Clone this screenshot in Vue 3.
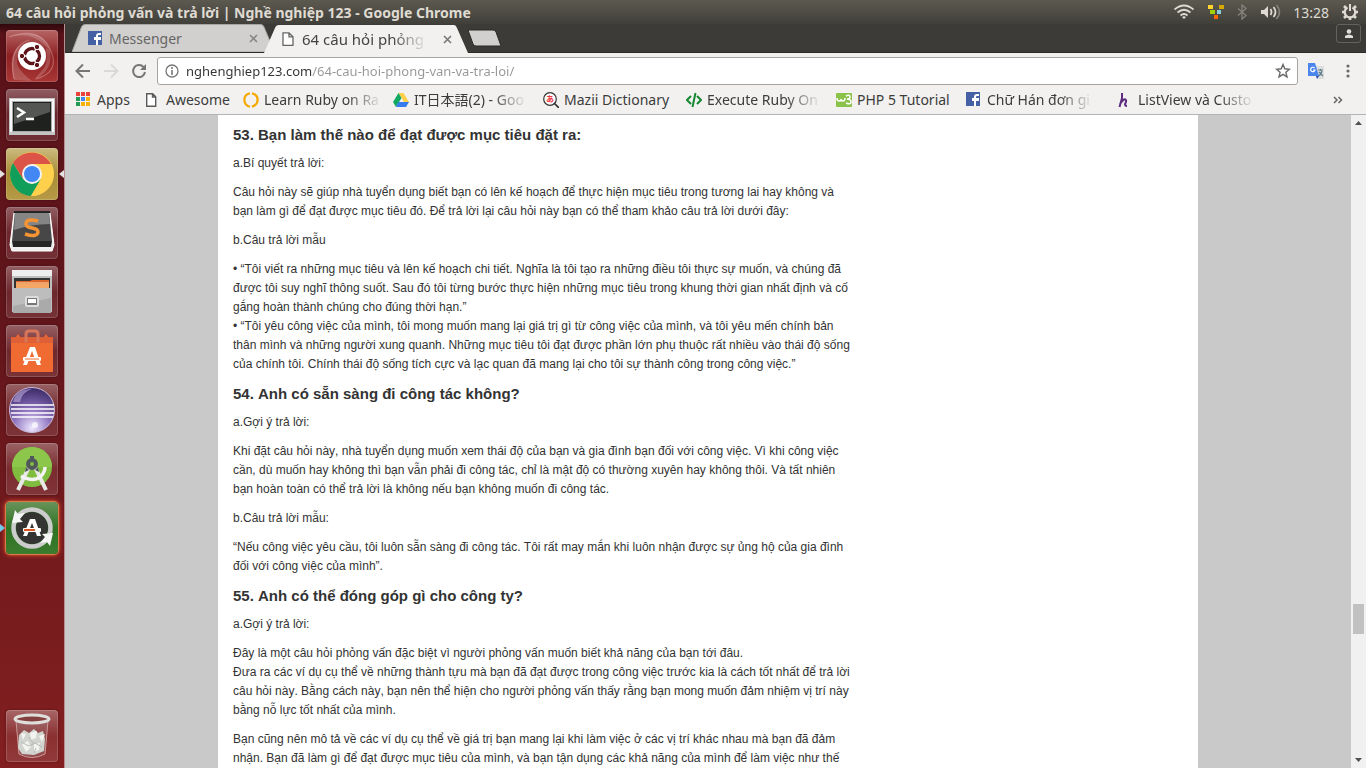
<script setup>
import { ref } from 'vue'

const address = ref('nghenghiep123.com/64-cau-hoi-phong-van-va-tra-loi/')

const bookmarks = [
  { icon: 'apps', label: 'Apps' },
  { icon: 'file', label: 'Awesome' },
  { icon: 'ring', label: 'Learn Ruby on Ra', fade: true },
  { icon: 'drive', label: 'IT日本語(2) - Goo', fade: true },
  { icon: 'mazii', label: 'Mazii Dictionary' },
  { icon: 'code', label: 'Execute Ruby On', fade: true },
  { icon: 'w3', label: 'PHP 5 Tutorial' },
  { icon: 'facebook', label: 'Chữ Hán đơn gi', fade: true },
  { icon: 'lambda', label: 'ListView và Custo', fade: true },
]

const sections = [
  {
    title: '53. Bạn làm thế nào để đạt được mục tiêu đặt ra:',
    paragraphs: [
      ['a.Bí quyết trả lời:'],
      ['Câu hỏi này sẽ giúp nhà tuyển dụng biết bạn có lên kế hoạch để thực hiện mục tiêu trong tương lai hay không và bạn làm gì để đạt được mục tiêu đó. Để trả lời lại câu hỏi này bạn có thể tham khảo câu trả lời dưới đây:'],
      ['b.Câu trả lời mẫu'],
      [
        '• “Tôi viết ra những mục tiêu và lên kế hoạch chi tiết. Nghĩa là tôi tạo ra những điều tôi thực sự muốn, và chúng đã được tôi suy nghĩ thông suốt. Sau đó tôi từng bước thực hiện những mục tiêu trong khung thời gian nhất định và cố gắng hoàn thành chúng cho đúng thời hạn.”',
        '• “Tôi yêu công việc của mình, tôi mong muốn mang lại giá trị gì từ công việc của mình, và tôi yêu mến chính bản thân mình và những người xung quanh. Những mục tiêu tôi đạt được phần lớn phụ thuộc rất nhiều vào thái độ sống của chính tôi. Chính thái độ sống tích cực và lạc quan đã mang lại cho tôi sự thành công trong công việc.”',
      ],
    ],
  },
  {
    title: '54. Anh có sẵn sàng đi công tác không?',
    paragraphs: [
      ['a.Gợi ý trả lời:'],
      ['Khi đặt câu hỏi này, nhà tuyển dụng muốn xem thái độ của bạn và gia đình bạn đối với công việc. Vì khi công việc cần, dù muốn hay không thì bạn vẫn phải đi công tác, chỉ là mật độ có thường xuyên hay không thôi. Và tất nhiên bạn hoàn toàn có thể trả lời là không nếu bạn không muốn đi công tác.'],
      ['b.Câu trả lời mẫu:'],
      ['“Nếu công việc yêu cầu, tôi luôn sẵn sàng đi công tác. Tôi rất may mắn khi luôn nhận được sự ủng hộ của gia đình đối với công việc của mình”.'],
    ],
  },
  {
    title: '55. Anh có thể đóng góp gì cho công ty?',
    paragraphs: [
      ['a.Gợi ý trả lời:'],
      [
        'Đây là một câu hỏi phỏng vấn đặc biệt vì người phỏng vấn muốn biết khả năng của bạn tới đâu.',
        'Đưa ra các ví dụ cụ thể về những thành tựu mà bạn đã đạt được trong công việc trước kia là cách tốt nhất để trả lời câu hỏi này. Bằng cách này, bạn nên thể hiện cho người phỏng vấn thấy rằng bạn mong muốn đảm nhiệm vị trí này bằng nỗ lực tốt nhất của mình.',
      ],
      ['Bạn cũng nên mô tả về các ví dụ cụ thể về giá trị bạn mang lại khi làm việc ở các vị trí khác nhau mà bạn đã đảm nhận. Bạn đã làm gì để đạt được mục tiêu của mình, và bạn tận dụng các khả năng của mình để làm việc như thế'],
    ],
  },
]
</script>

<template>
  <div class="desktop">
    <header class="panel">
      <span class="window-title">64 câu hỏi phỏng vấn và trả lời | Nghề nghiệp 123 - Google Chrome</span>
      <div class="indicators">
        <svg class="wifi" width="22" height="16" viewBox="0 0 22 16" fill="none" stroke="#dfdbd2" stroke-width="1.7">
          <path d="M1.500 5.500Q11-2.500 20.500 5.500M4.500 8.500Q11 3 17.500 8.500M7.500 11.500Q11 8.500 14.500 11.500" />
          <path d="M11 15l-2-2q2-1.600 4 0z" fill="#dfdbd2" stroke="none" />
        </svg>
        <svg class="ibus" width="16" height="16" viewBox="0 0 16 16">
          <path fill="#ffd42a" d="M0 1h5v4H0z" /><path fill="#d4aa00" d="M11 1h5v4h-5z" />
          <path fill="#a0d000" d="M2 6h5v4H2z" /><path fill="#87cdde" d="M9 6h4v4H9z" /><path fill="#ff6600" d="M6 11h4v4H6z" />
        </svg>
        <svg class="bluetooth" width="10" height="16" viewBox="0 0 10 16" fill="none" stroke="#85837c" stroke-width="1.3"><path d="M1 4.500l8 7L5 15V1l4 3.500-8 7" /></svg>
        <svg class="sound" width="20" height="16" viewBox="0 0 20 16" fill="none">
          <path d="M0 6h3l4-4v12l-4-4H0z" fill="#dfdbd2" />
          <path d="M9.500 5q2 3 0 6M12.500 3q4 5 0 10" stroke="#dfdbd2" stroke-width="1.800" /><path d="M15.500 1q6 7 0 14" stroke="#85837c" stroke-width="1.600" />
        </svg>
        <time class="clock">13:28</time>
        <svg width="18" height="18" viewBox="0 0 18 18" fill="none" stroke="#dfdbd2">
          <path d="M6.500 4.500a5.300 5.300 0 1 0 5 0" stroke-width="2.300" /><path d="M9 1v7" stroke-width="2" />
          <path d="M3 3l2 2M15 3l-2 2M1 9h3M17 9h-3M3 15l2-2M15 15l-2-2M9 14v3" stroke-width="2.600" />
        </svg>
      </div>
    </header>

    <div class="workspace">
      <nav class="launcher" aria-label="Launcher">
        <button class="tile ubuntu" aria-label="Search">
          <svg viewBox="0 0 52 52">
            <g fill="none" stroke="#e9b5b1" stroke-opacity=".4" stroke-width="1.200"><path d="M3 7Q33-4 44 19T30 49M8 49Q2 17 23 10" /></g>
            <path d="M3 7Q36-4 44 20L38 15Q25 1 3 7zM8 50Q1 22 15 15L12 27Q7 37 26 51zM44 20Q48 40 28 50L38 38Q42 32 40 18z" fill="#fff" opacity=".18" />
            <circle cx="26" cy="26" r="14" fill="#fff" />
            <circle cx="26" cy="26" r="7.500" fill="none" stroke="#5d1419" stroke-width="3.400" />
            <path d="M26 26L16 26M26 26L31 17M26 26l5 9" stroke="#fff" stroke-width="1.500" />
            <circle cx="26" cy="26" r="5.500" fill="#fff" />
            <g fill="#5d1419" stroke="#fff"><circle cx="16" cy="26" r="2.700" /><circle cx="31" cy="17" r="2.700" /><circle cx="31" cy="35" r="2.700" /></g>
          </svg>
        </button>
        <button class="tile" aria-label="Terminal">
          <svg viewBox="0 0 52 52">
            <path d="M3 9h46v37H3z" fill="#c4c4c4" /><path d="M4 10h44v33H4z" fill="#f6f6f6" /><path d="M6 12h40v31H6z" fill="#aaa" />
            <path d="M7 13h38v29H7z" fill="#1f211f" /><path d="M8 14h36v9L8 35z" fill="#777a77" opacity=".6" />
            <path d="M11 19l7 4.500-7 4.500M20 30h8" fill="none" stroke="#fff" stroke-width="2.500" />
          </svg>
        </button>
        <button class="tile chrome" aria-label="Google Chrome">
          <svg viewBox="0 0 52 52">
            <circle cx="26" cy="26" r="22" fill="#ffd04b" /><path d="M7 15A22 22 0 0 1 45 16H26L17 31z" fill="#db5447" />
            <path d="M7 15A22 22 0 0 0 25 48L35 31 26 36 17 31z" fill="#119e5a" />
            <path d="M45 16H26L35 31 25 48A22 22 0 0 0 45 16z" fill="#ffd04b" />
            <circle cx="26" cy="26" r="10" fill="#f2f2f2" /><circle cx="26" cy="26" r="8" fill="#4387f4" />
          </svg>
        </button>
        <button class="tile" aria-label="Sublime Text">
          <svg viewBox="0 0 52 52">
            <path d="M8 6h36l4 32-2 6H6l-2-6z" fill="#eee" stroke="#fff" /><path d="M9 5h34l3 29H6z" fill="#474747" /><path d="M9 5h34l1 12Q25 17 8 23z" fill="#858585" />
            <path d="M6 34h40l-1 6H7z" fill="#242424" /><path d="M8 5h36" stroke="#242424" stroke-width="2" />
            <path d="M32 14Q20 11 20 17Q20 20 26 21Q32 22 32 25Q31 31 19 27" fill="none" stroke="#f69332" stroke-width="3.500" />
          </svg>
        </button>
        <button class="tile" aria-label="Files">
          <svg viewBox="0 0 52 52">
            <path d="M6 4h40v42H6z" fill="#bfbfbf" /><path d="M6 4h40v6H6z" fill="#eee" /><path d="M8 12h36v11H8z" fill="#333" />
            <path d="M10 15h14l2-1h17v9H10z" fill="#dd652b" /><path d="M10 18h33v5H10z" fill="#f5a866" /><path d="M10 17h33" stroke="#ffe0ad" />
            <path d="M7 22h38v25H7z" fill="#aaa" /><path d="M7 22h38v10L7 40z" fill="#bdbdbd" />
            <rect x="20" y="31" width="12" height="9" rx="1" fill="#777" stroke="#ddd" stroke-width="2" /><path d="M22 33h8v4h-8z" fill="#fff" />
          </svg>
        </button>
        <button class="tile" aria-label="Ubuntu Software">
          <svg viewBox="0 0 52 52">
            <path d="M5 12h5l2-3 2 3h24l2-3 2 3h5v35H5z" fill="#f06b32" /><path d="M5 12h42v6H5z" fill="#df6036" />
            <path d="M20 17V9q0-3 3-3h6q3 0 3 3v8" fill="none" stroke="#d9765a" stroke-width="3" />
            <path d="M24 22h5l6 18h-4l-5-14-5 14h-4z" fill="#fff" /><rect x="17" y="32" width="18" height="4" rx="1" fill="#fff" /><path d="M19 34h14" stroke="#f06b32" />
          </svg>
        </button>
        <button class="tile" aria-label="Eclipse">
          <svg viewBox="0 0 52 52">
            <defs><radialGradient id="orb" cx=".5" cy=".9" r=".85"><stop stop-color="#eee8ff" /><stop offset=".5" stop-color="#8c71bd" /><stop offset="1" stop-color="#42306e" /></radialGradient></defs>
            <circle cx="26" cy="26" r="22.500" fill="url(#orb)" stroke="#c8bbdf" /><path d="M7 18Q10 5 26 5Q16 8 14 18z" fill="#c6b5e6" opacity=".55" />
            <path d="M5 21h43M5 25h43M5 29h43M6 33h41" stroke="#fff" stroke-width="1.300" /><circle cx="29" cy="41" r="3" fill="#fff" opacity=".7" />
          </svg>
        </button>
        <button class="tile" aria-label="Android Studio">
          <svg viewBox="0 0 52 52">
            <circle cx="26" cy="24" r="20" fill="#80bd3f" /><path d="M6 24a20 20 0 0 1 40 0z" fill="#8cc74c" />
            <path d="M23 24L12 47M29 24l11 23" stroke="#e8e8e8" stroke-width="4" /><path d="M15 33q13 7 20 0 4-4 4-9" fill="none" stroke="#f3f3f3" stroke-width="3.500" />
            <circle cx="26" cy="21" r="4" fill="#80bd3f" stroke="#51585c" stroke-width="4" /><path d="M24 13h4v4h-4zM20 24l-1 5 4-2zM32 24l1 5-4-2z" fill="#51585c" />
          </svg>
        </button>
        <button class="tile updater" aria-label="Software Updater">
          <svg viewBox="0 0 52 52">
            <circle cx="26" cy="26" r="16" fill="#343432" /><circle cx="26" cy="26" r="18.500" fill="none" stroke="#ccc" stroke-width="4.500" />
            <path d="M6 21L9 8l3 4 7-1-5 6 3 3z" fill="#f6f6f6" /><path d="M47 31l-3 13-3-4-7 1 5-6-3-3z" fill="#f6f6f6" />
            <path d="M24 17h5l6 17h-4l-5-13-5 13h-4z" fill="#fff" /><rect x="17" y="26" width="18" height="4" rx="1" fill="#fff" /><path d="M18 28h11" stroke="#dc5720" stroke-width="2" />
          </svg>
        </button>
        <button class="tile trash" aria-label="Trash">
          <svg viewBox="0 0 52 52">
            <path d="M10 11l3 33q13 7 26 0l3-33" fill="#aaa" fill-opacity=".2" stroke="#c99" />
            <path d="M13 25l5-5 5 3 5-4 4 4 5-2 2 8-1 12-10 4-12-1-4-6z" fill="#d1d4cf" />
            <path d="M15 23l5 1-3 6zM24 23l7-2-1 7-5 2zM33 26l6-2-3 8zM16 34l6-3 3 6-5 5zM28 34l6-1-1 7-5 2z" fill="#f3f4f1" />
            <path d="M15 32l8 4 6-3 7 4M23 27l4 6M28 43l2-5" fill="none" stroke="#b5b9b3" />
            <ellipse cx="26" cy="9" rx="17" ry="4" fill="#843f3f" stroke="#dededb" stroke-width="3" />
          </svg>
        </button>
      </nav>

      <main class="browser">
        <div class="tabstrip">
          <div class="tab">
            <svg class="tab-shape" viewBox="0 0 200 28" preserveAspectRatio="none"><path d="M0 28L9.500 3Q10.500 .5 13 .5H189Q191 .5 192 3L200 22V28z" fill="#d1d0ce" stroke="#a6a5a1" /></svg>
            <svg class="fav" viewBox="0 0 14 14"><path d="M0 0h14v14H0z" fill="#4660a5" /><path d="M8 14V9H6V6h2V5q0-3 3-3h2v2h-2Q10 4 10 5v1h3v3h-3v5" fill="#fff" /></svg>
            <span class="tab-label">Messenger</span>
            <button class="close" aria-label="Close Messenger"><svg width="9" height="9" viewBox="0 0 9 9"><path d="M1 1l7 7M8 1L1 8" stroke="#888" stroke-width="1.600" /></svg></button>
          </div>
          <div class="tab active">
            <svg class="tab-shape" viewBox="0 0 206 28" preserveAspectRatio="none"><path d="M0 28L11 3Q12 0 15 0H190Q192 0 193 3L204 28z" fill="#f2f1f0" /></svg>
            <svg class="fav" viewBox="0 0 14 14"><path d="M2 .8h6l4 4v8.500H2zM8 .8v4h4" fill="#fff" stroke="#666" stroke-width="1.300" /></svg>
            <span class="tab-label"><span class="fade">64 câu hỏi phỏng</span></span>
            <button class="close" aria-label="Close page"><svg width="9" height="9" viewBox="0 0 9 9"><path d="M1 1l7 7M8 1L1 8" stroke="#777" stroke-width="1.600" /></svg></button>
          </div>
          <button class="new-tab" aria-label="New tab"><svg width="34" height="18" viewBox="0 0 34 18"><path d="M1 1h25q2 0 3 2l5 14H9q-2 0-3-2z" fill="#d1d0ce" stroke="#2b2a26" /></svg></button>
          <button class="profile" aria-label="Profile"><svg width="10" height="10" viewBox="0 0 10 10" fill="#dfdedb"><circle cx="5" cy="2.500" r="2.300" /><path d="M1 9V7q4-3 8 0v2z" /></svg></button>
        </div>

        <div class="toolbar">
          <button class="icon" aria-label="Back"><svg width="16" height="16" viewBox="0 0 16 16" fill="none" stroke="#777674" stroke-width="2"><path d="M15 8H2M8 1.500L1.500 8 8 14.500" /></svg></button>
          <button class="icon" aria-label="Forward" disabled><svg width="16" height="16" viewBox="0 0 16 16" fill="none" stroke="#dad9d7" stroke-width="2"><path d="M1 8h13M8 1.500L14.500 8 8 14.500" /></svg></button>
          <button class="icon" aria-label="Reload"><svg width="16" height="16" viewBox="0 0 16 16"><path d="M12.500 4A6 6 0 1 0 14 9" fill="none" stroke="#777674" stroke-width="2" /><path d="M15 1v6H9z" fill="#777674" /></svg></button>
          <div class="omnibox">
            <svg width="14" height="14" viewBox="0 0 14 14"><circle cx="7" cy="7" r="6" fill="none" stroke="#777" stroke-width="1.300" /><path d="M7 3v2M7 6v5" stroke="#777" stroke-width="1.600" /></svg>
            <input v-model="address" class="address" type="text" aria-label="Address" spellcheck="false" />
            <button class="star" aria-label="Bookmark"><svg width="16" height="16" viewBox="0 0 16 16"><path d="M8 1.500l1.800 4.300 4.700.4-3.600 3.100 1.100 4.600L8 11.400l-4 2.500 1.100-4.600L1.500 6.200l4.700-.4z" fill="none" stroke="#686868" stroke-width="1.400" /></svg></button>
          </div>
          <button class="icon translate" aria-label="Translate">
            <svg width="16" height="16" viewBox="0 0 16 16"><path d="M5 3h11v13H9z" fill="#dedede" /><path d="M10 7h5M12.500 6v2M14 8q-1 4-4 5M11 9l4 4" stroke="#607d8b" stroke-width="1.200" fill="none" /><path d="M0 0h7l4 13H0z" fill="#4c86ed" /><path d="M8 13h3l-2 3z" fill="#2850b5" /><path d="M6.500 5A2.200 2.200 0 1 0 7 7H5" fill="none" stroke="#fff" stroke-width="1.200" /></svg>
          </button>
          <button class="icon" aria-label="Menu"><svg width="4" height="14" viewBox="0 0 4 14" fill="#6b6a69"><circle cx="2" cy="2" r="1.600" /><circle cx="2" cy="7" r="1.600" /><circle cx="2" cy="12" r="1.600" /></svg></button>
        </div>

        <nav class="bookmarks" aria-label="Bookmarks">
          <a v-for="b in bookmarks" :key="b.label" href="#" class="bookmark">
            <svg class="bm-icon" viewBox="0 0 16 16">
              <g v-if="b.icon === 'apps'">
                <path d="M0 0h4v4H0zM5 0h4v4H5zM10 0h4v4h-4z" fill="#e8423a" /><path d="M0 5h4v4H0zM0 10h4v4H0z" fill="#279b55" /><path d="M5 5h4v4H5z" fill="#4486f4" /><path d="M10 5h4v4h-4zM5 10h4v4H5zM10 10h4v4h-4z" fill="#f6b400" />
              </g>
              <path v-else-if="b.icon === 'file'" d="M1.700 1.700h6l3 3v9.600h-9zM7.500 2v3h3" fill="#fff" stroke="#5b5b5b" stroke-width="1.400" />
              <g v-else-if="b.icon === 'ring'" fill="none" stroke="#f5a800" stroke-width="2.200"><path d="M7 1.200C-1 3 0 13 7 14.800M9 1.200c8 2.300 7 11.300 0 13.600" /></g>
              <g v-else-if="b.icon === 'drive'"><path d="M5.500 1h5l5.500 9h-5z" fill="#ffcf48" /><path d="M5.500 1L0 10l3 5 5.500-9z" fill="#11a861" /><path d="M5.500 10H16l-3 5H3z" fill="#377bef" /></g>
              <g v-else-if="b.icon === 'mazii'" fill="none"><circle cx="7" cy="7" r="6.300" fill="#fff" stroke="#333" stroke-width="1.200" /><path d="M11 11l5 5" stroke="#333" stroke-width="1.700" /><text x="3" y="10" font-size="8" font-weight="700" fill="#ef3038" font-family="Noto Sans CJK JP, sans-serif">あ</text></g>
              <g v-else-if="b.icon === 'code'" fill="none" stroke="#168832" stroke-width="2"><path d="M5 4L1 8l4 4M11 4l4 4-4 4M9.500 1l-3 14" /></g>
              <g v-else-if="b.icon === 'w3'"><rect y="1" width="16" height="14" rx="1" fill="#8bc34a" /><path d="M1 6q0 3 2 3t2-2q0 2 2 2t2-3M10 4q4-2 4 1 0 2-3 2 4 0 4 3t-5 1" fill="none" stroke="#fff" stroke-width="1.500" /></g>
              <g v-else-if="b.icon === 'facebook'"><path d="M0 0h14v14H0z" fill="#4660a5" /><path d="M8 14V9H6V6h2V5q0-3 3-3h2v2h-2q-1 0-1 1v1h3v3h-3v5" fill="#fff" /></g>
              <path v-else d="M5 1v5L2.500 15M3 12Q7 6 8.500 7.500T8 12q0 2 2 2" fill="none" stroke="#5d2d80" stroke-width="2" />
            </svg>
            <span class="bm-label" :class="{ fade: b.fade }">{{ b.label }}</span>
          </a>
          <button class="more" aria-label="More bookmarks"><svg width="10" height="8" viewBox="0 0 10 8"><path d="M1 1l3 3-3 3M5.500 1l3 3-3 3" fill="none" stroke="#666" stroke-width="1.500" /></svg></button>
        </nav>

        <div class="viewport">
          <div class="page">
            <article class="sheet">
              <div class="column">
                <section v-for="s in sections" :key="s.title">
                  <h3>{{ s.title }}</h3>
                  <p v-for="(p, i) in s.paragraphs" :key="i"><template v-for="(t, j) in p" :key="j"><br v-if="j" />{{ t }}</template></p>
                </section>
              </div>
            </article>
          </div>
          <div class="scrollbar" aria-hidden="true">
            <svg class="arrow" viewBox="0 0 15 17"><path d="M4 10h7L7.500 6z" fill="#505050" /></svg>
            <div class="before"></div>
            <div class="thumb"></div>
            <div class="after"></div>
            <svg class="arrow" viewBox="0 0 15 17"><path d="M4 7h7l-3.500 4z" fill="#505050" /></svg>
          </div>
        </div>
      </main>
    </div>
  </div>
</template>

<style>
body { overflow: hidden; }
</style>

<style scoped>
* { box-sizing: border-box; }
button { border: 0; padding: 0; background: none; font: inherit; display: flex; align-items: center; justify-content: center; }
svg { display: block; flex: none; }
.desktop { height: 100vh; display: flex; flex-direction: column; overflow: hidden; font-family: "Noto Sans", "Noto Sans CJK JP", sans-serif; font-size: 14px; color: #3c3c3c; }
.panel { height: 24px; flex: none; display: flex; align-items: center; justify-content: space-between; padding: 0 7px 0 6px; background: linear-gradient(#5c594f, #403f3a); color: #dfdbd2; }
.window-title { font-weight: 700; white-space: nowrap; }
.indicators { display: flex; align-items: center; }
.wifi { margin-right: 13px; }
.ibus { margin-right: 13px; }
.bluetooth { margin-right: 14px; }
.sound { margin-right: 12px; }
.clock { margin-right: 12px; }
.workspace { flex: 1; min-height: 0; display: flex; }
.launcher { width: 65px; flex: none; display: flex; flex-direction: column; gap: 7px; padding: 6px; background: linear-gradient(#2f080c, #5a1219 10px, #60151b 35%, #831f20); border-right: 1px solid #b88d91; }
.tile { position: relative; width: 52px; height: 52px; flex: none; border-radius: 4px; background: linear-gradient(rgba(255, 255, 255, .32), rgba(255, 255, 255, .08) 50%, rgba(255, 255, 255, .12)); box-shadow: inset 0 0 0 1px rgba(255, 255, 255, .16), 0 0 3px rgba(0, 0, 0, .3); }
.tile svg { width: 52px; height: 52px; }
.tile.ubuntu { background: linear-gradient(#b66565, #8e2022 50%, #a83735); }
.tile.chrome { background: linear-gradient(#cbbb80, #a98c35 50%, #b69a46); }
.chrome::before, .updater::before { content: ""; position: absolute; left: -6px; top: 22px; border: 4px solid transparent; border-left: 5px solid #e5e1e1; border-right: 0; }
.chrome::after { content: ""; position: absolute; right: -6px; top: 22px; border: 4px solid transparent; border-right: 5px solid #e5e1e1; border-left: 0; }
.tile.updater { background: linear-gradient(#69935a, #2f7224 50%, #3b7c2e); box-shadow: 0 0 1px 1px #e5824d, 0 0 5px 1px #e2522d; }
.updater::before { border-left-color: #75c9eb; }
.trash { margin-top: auto; }
.browser { flex: 1; min-width: 0; display: flex; flex-direction: column; background: #f2f1f0; }
.tabstrip { height: 29px; flex: none; display: flex; align-items: flex-end; background: #3c3b37; padding: 0 5px 0 7px; border-bottom: 1px solid #2c2b27; }
.tab { position: relative; width: 200px; height: 28px; display: flex; align-items: center; padding: 0 14px 0 16px; color: #666; }
.tab.active { width: 206px; margin-left: -8px; margin-bottom: -1px; padding: 0 18px 0 17px; color: #444; font-size: 15px; }
.tab-shape { position: absolute; inset: 0; width: 100%; height: 100%; }
.tab > :not(.tab-shape) { position: relative; }
.fav { width: 14px; height: 14px; margin-right: 7px; }
.tab-label { flex: 1; white-space: nowrap; }
.fade { -webkit-mask-image: linear-gradient(to right, #000 calc(100% - 32px), rgba(0, 0, 0, .1)); mask-image: linear-gradient(to right, #000 calc(100% - 32px), rgba(0, 0, 0, .1)); }
.new-tab { align-self: center; margin-left: -3px; }
.profile { align-self: flex-start; margin-left: auto; width: 25px; height: 19px; border: 1px solid #63625e; border-radius: 3px; }
.toolbar { height: 35px; flex: none; display: flex; align-items: center; padding: 0 16px 0 10px; gap: 12px; }
.icon { flex: none; }
.omnibox { flex: 1; height: 28px; display: flex; align-items: center; gap: 7px; margin-left: -2px; padding: 0 6px 0 7px; background: #fff; border: 1px solid #a6a5a2; border-radius: 3px; }
.address { flex: 1; min-width: 0; height: 24px; border: 0; padding: 0; outline: 0; font: inherit; font-size: 13px; color: transparent; background: linear-gradient(to right, #333 126px, #969696 126px); -webkit-background-clip: text; background-clip: text; }
.translate { margin-left: -2px; margin-right: 10px; }
.bookmarks { height: 27px; flex: none; display: grid; grid-template-columns: 69px 98px 150px 150px 143px 150px 130px 151px 136px 1fr; padding: 0 23px 3px 11px; border-bottom: 1px solid #b6b4b2; }
.bookmark { display: flex; align-items: center; gap: 5px; color: inherit; text-decoration: none; }
.bm-icon { width: 16px; height: 16px; }
.bm-label { white-space: nowrap; line-height: 22px; }
.more { justify-self: end; }
.viewport { flex: 1; min-height: 0; display: flex; }
.page { flex: 1; min-width: 0; overflow: hidden; background: #c9c9c9; display: flex; justify-content: center; align-items: flex-start; }
.sheet { width: 100%; max-width: 980px; background: #fff; padding: 10px 15px; }
.column { max-width: 624px; font: 12px/19px "Liberation Sans", Arial, sans-serif; font-kerning: none; color: #333; }
h3 { margin: 0 0 10px; font-size: 15px; line-height: 19px; font-weight: 700; }
p { margin: 0 0 10px; }
.scrollbar { width: 15px; flex: none; display: flex; flex-direction: column; align-items: center; background: #f1f1f1; }
.arrow { width: 15px; height: 17px; }
.before { flex: 472; }
.thumb { width: 11px; height: 30px; background: #c1c1c1; }
.after { flex: 117; }
</style>
